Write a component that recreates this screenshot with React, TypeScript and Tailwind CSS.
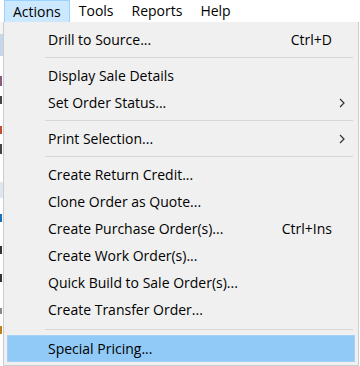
type Entry = { label?: string; shortcut?: string; sub?: boolean; active?: boolean; sep?: boolean; tall?: boolean }

const entries: Entry[] = [
  { label: 'Drill to Source...', shortcut: 'Ctrl+D' },
  { sep: true },
  { label: 'Display Sale Details' },
  { label: 'Set Order Status...', sub: true },
  { sep: true },
  { label: 'Print Selection...', sub: true },
  { sep: true },
  { label: 'Create Return Credit...' },
  { label: 'Clone Order as Quote...' },
  { label: 'Create Purchase Order(s)...', shortcut: 'Ctrl+Ins' },
  { label: 'Create Work Order(s)...' },
  { label: 'Quick Build to Sale Order(s)...' },
  { label: 'Create Transfer Order...' },
  { sep: true, tall: true },
  { label: 'Special Pricing...', active: true },
]

const menus = ['Actions', 'Tools', 'Reports', 'Help']

const App = () => {
  return (
    <div className="w-[360px] h-[366px] overflow-hidden bg-white text-[14px] text-black" style={{ fontFamily: '"Open Sans", "Noto Sans", sans-serif' }}>
      {/* menu bar */}
      <div className="flex h-[22px] items-stretch pl-[4px] bg-white">
        {menus.map((m, idx) => (
          <div
            key={m}
            className={`flex items-center px-[8px] leading-none ${idx === 0 ? 'bg-[#cce8ff] border border-[#99d1ff] border-b-0' : 'border border-transparent'}`}
          >
            {m}
          </div>
        ))}
      </div>
      <div className="flex h-[344px]">
        {/* bits of the window behind */}
        <div className="w-[3px] flex flex-col bg-white">
          <div className="h-[12px] bg-[#f5f5f5]" />
          <div className="h-[22px] bg-[#c5d8ea]" />
          <div className="h-[20px]" />
          <div className="h-[10px] bg-[#8a5a7a] w-[2px]" />
          <div className="h-[10px]" />
          <div className="h-[8px] bg-[#444] w-[2px]" />
          <div className="h-[22px]" />
          <div className="h-[8px] bg-[#c05030] w-[2px]" />
          <div className="h-[10px]" />
          <div className="h-[10px] bg-[#444] w-[2px]" />
          <div className="h-[28px]" />
          <div className="h-[16px] bg-[#e0e6ee]" />
          <div className="h-[16px]" />
          <div className="h-[8px] bg-[#1a6fc0] w-[2px]" />
          <div className="h-[24px]" />
          <div className="h-[8px] bg-[#333] w-[2px]" />
          <div className="h-[20px]" />
          <div className="h-[8px] bg-[#333] w-[2px]" />
          <div className="h-[26px]" />
          <div className="h-[6px] bg-[#888] w-[2px]" />
          <div className="h-[12px]" />
          <div className="h-[8px] bg-[#c08020] w-[2px]" />
        </div>
        {/* dropdown */}
        <div className="w-[356px] bg-[#f0f0f0] border border-[#cccccc] border-t-0 pt-[4px] px-[3px]">
          {entries.map((e, idx) =>
            e.sep ? (
              <div key={idx} className={`flex items-center pl-[38px] pr-[2px] ${e.tall ? 'h-[12px]' : 'h-[9px]'}`}>
                <div className="h-px flex-1 bg-[#d7d7d7]" />
              </div>
            ) : (
              <div
                key={idx}
                className={`flex items-center h-[27px] pl-[40px] pr-[8px] border ${e.active ? 'bg-[#91c9f7] border-[#a3d1f7]' : 'border-transparent'}`}
              >
                <span className="flex-1 whitespace-nowrap">{e.label}</span>
                {e.shortcut && <span className="mr-[14px]">{e.shortcut}</span>}
                {e.sub && (
                  <svg width="6" height="10" viewBox="0 0 6 10" className="mr-[1px]">
                    <path d="M1 1 L5 5 L1 9" fill="none" stroke="#333" strokeWidth="1.2" />
                  </svg>
                )}
              </div>
            )
          )}
        </div>
      </div>
    </div>
  )
}

export default App
